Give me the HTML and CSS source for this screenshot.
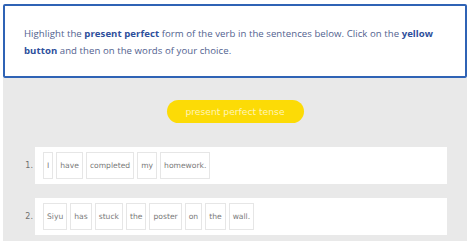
FILE: index.html
```html
<!DOCTYPE html>
<html>
<head>
<meta charset="utf-8">
<link rel="stylesheet" href="styles.css">
</head>
<body>
<div class="page">
  <div class="instructions">
    <p>Highlight the <b>present perfect</b> form of the verb in the sentences below. Click on the <b>yellow button</b> and then on the words of your choice.</p>
  </div>
  <div class="exercise">
    <div class="btn-row"><button class="tense-btn">present perfect tense</button></div>
    <div class="item">
      <span class="num">1.</span>
      <div class="sentence">
        <span class="word">I</span><span class="word">have</span><span class="word">completed</span><span class="word">my</span><span class="word">homework.</span>
      </div>
    </div>
    <div class="item">
      <span class="num">2.</span>
      <div class="sentence">
        <span class="word">Siyu</span><span class="word">has</span><span class="word">stuck</span><span class="word">the</span><span class="word">poster</span><span class="word">on</span><span class="word">the</span><span class="word">wall.</span>
      </div>
    </div>
  </div>
</div>
</body>
</html>
```

FILE: styles.css
```css
html, body {
  margin: 0;
  padding: 0;
  background: #ffffff;
  overflow: hidden;
}
.page {
  width: 464px;
  padding: 4px 0 0 3px;
}
.instructions {
  border: 2px solid #2f63b5;
  border-radius: 2px;
  background: #ffffff;
  padding: 19px 10px 15px 19px;
  height: 36px;
}
.instructions p {
  margin: 0;
  font-family: "Open Sans", "Liberation Sans", sans-serif;
  font-size: 9.6px;
  letter-spacing: 0.05px;
  line-height: 17px;
  color: #52628f;
}
.instructions b {
  color: #2e4f9c;
  font-weight: 700;
}
.exercise {
  background: #e9e9e9;
  padding: 22px 20px 6px 0;
}
.btn-row {
  display: flex;
  justify-content: center;
  padding-left: 20px;
  margin-bottom: 24px;
}
.tense-btn {
  width: 137px;
  height: 23px;
  border: none;
  border-radius: 12px;
  background: #fcdb06;
  color: #fff4b8;
  font-family: "DejaVu Sans", Verdana, sans-serif;
  font-size: 9.2px;
  padding: 0;
}
.item {
  display: flex;
  align-items: center;
  margin-bottom: 14px;
}
.item:last-child {
  margin-bottom: 0;
}
.num {
  width: 32px;
  box-sizing: border-box;
  padding-right: 2px;
  text-align: right;
  font-family: "DejaVu Sans", Verdana, sans-serif;
  font-size: 8px;
  color: #6f6f6f;
}
.sentence {
  flex: 1;
  background: #ffffff;
  height: 37px;
  box-sizing: border-box;
  padding: 5px 8px;
  display: flex;
  gap: 3px;
}
.word {
  border: 1px solid #e6e6e6;
  padding: 0 3px;
  height: 27px;
  box-sizing: border-box;
  display: flex;
  align-items: center;
  font-family: "DejaVu Sans", Verdana, sans-serif;
  font-size: 7.6px;
  color: #7a7a7a;
}
```
